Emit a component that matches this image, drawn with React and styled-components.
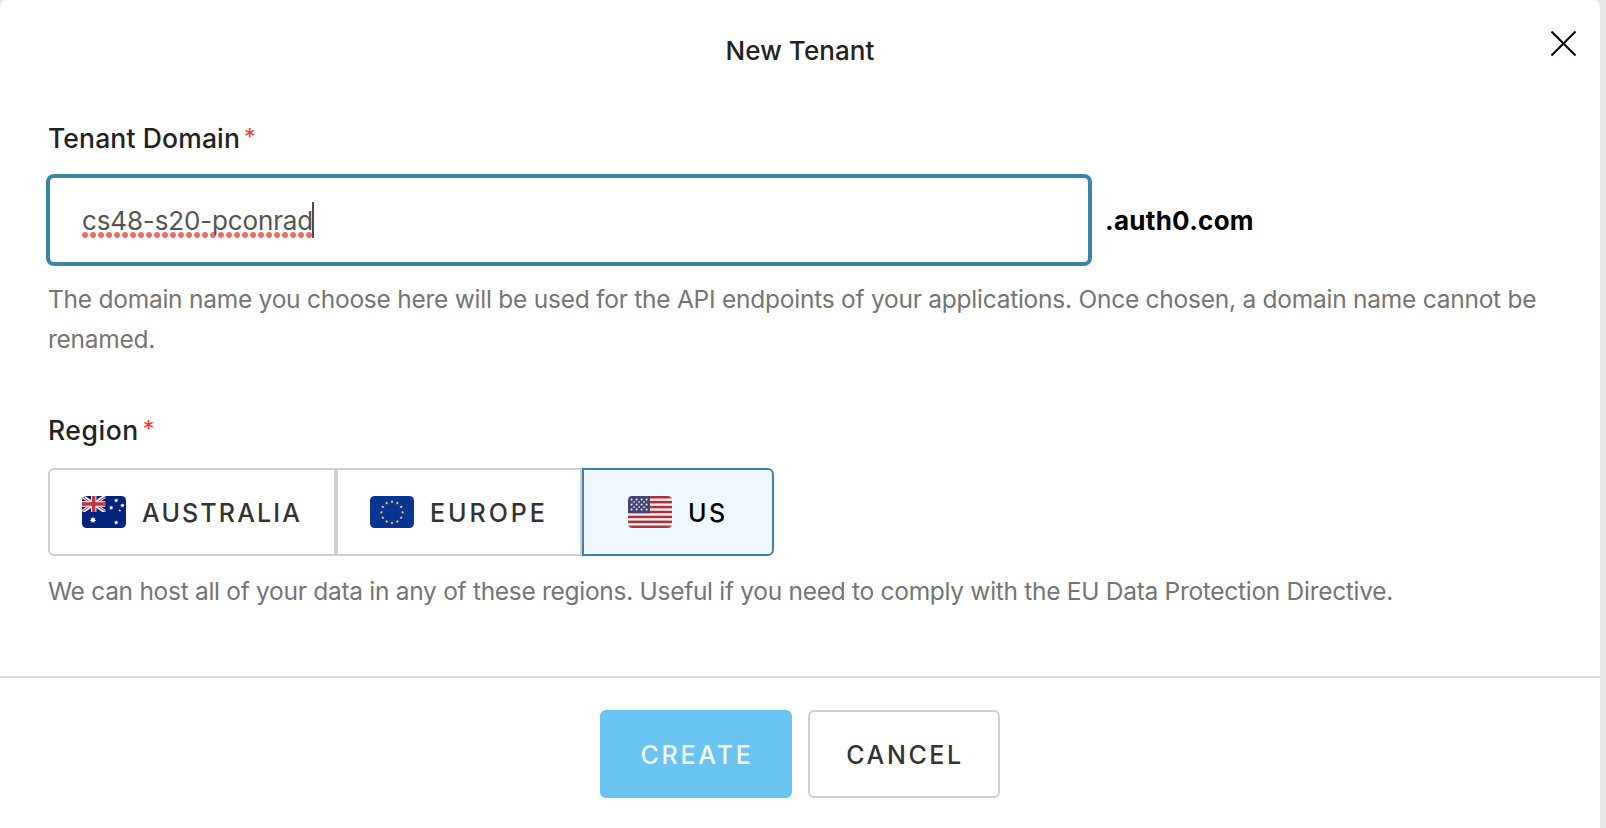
import React from 'react';
import styled, { createGlobalStyle, css } from 'styled-components';

const GlobalStyle = createGlobalStyle`
  * { box-sizing: border-box; }
  body {
    margin: 0;
    background: #e9e7e8;
    font-family: Inter, "Liberation Sans", sans-serif;
    -webkit-font-smoothing: antialiased;
  }
`;

const Dialog = styled.section`
  display: flex;
  flex-direction: column;
  width: 1600px;
  height: 828px;
  background: #fff;
  border-radius: 7px 7px 0 0;
  overflow: hidden;
`;

const Header = styled.header`
  display: grid;
  grid-template-columns: 49px 1fr 49px;
  height: 118px;
`;

const Title = styled.h1`
  grid-column: 2;
  margin: 31px 0 0;
  font-size: 26px;
  font-weight: 500;
  line-height: 40px;
  letter-spacing: 0.08px;
  text-align: center;
  color: #222;
`;

const CloseButton = styled.button`
  align-self: start;
  justify-self: start;
  margin-top: 31px;
  padding: 0;
  border: 0;
  background: none;
  line-height: 0;

  svg { display: block; }
`;

const Body = styled.div`
  flex: 1;
  padding: 0 48px;
`;

const Field = styled.div`
  display: flex;
  flex-direction: column;
  height: ${(p) => p.$height}px;
`;

const Label = styled.label`
  display: flex;
  height: 40px;
  font-size: 26.5px;
  font-weight: 500;
  line-height: 41px;
  letter-spacing: ${(p) => p.$track}px;
  color: #222;
`;

const Required = styled.span`
  margin-left: 4px;
  font-size: 23px;
  font-weight: 400;
  line-height: 38px;
  letter-spacing: 0;
  color: #f0392b;
`;

const DomainRow = styled.div`
  display: flex;
  align-items: center;
  margin: 16px 0 13px -2px;
`;

const DomainInput = styled.div`
  display: flex;
  align-items: center;
  width: 1046px;
  height: 92px;
  padding-left: 32px;
  border: 4px solid #3a84ab;
  border-radius: 8px;
  background: #fff;
`;

const Misspelled = styled.span`
  width: 230px;
  height: 36px;
  font-size: 26px;
  line-height: 37px;
  letter-spacing: -0.15px;
  white-space: nowrap;
  color: #555;
  background: radial-gradient(circle at 3px 3px, #ee6c61 2.6px, rgba(238, 108, 97, 0) 3.3px) 0 30px / 8px 6px repeat-x;
`;

const Caret = styled.span`
  width: 2px;
  height: 36px;
  background: #4c4c4c;
`;

const Suffix = styled.span`
  margin-left: 13px;
  font-size: 26px;
  font-weight: 650;
  line-height: 41px;
  letter-spacing: 0.27px;
  color: #000;
`;

const Help = styled.p`
  margin: 0;
  font-size: 24.5px;
  line-height: 40px;
  letter-spacing: ${(p) => p.$track}px;
  color: #757575;
`;

const RegionGroup = styled.div`
  display: flex;
  margin: 18px 0 15px;
`;

const RegionOption = styled.button`
  display: flex;
  align-items: center;
  gap: 16px;
  width: ${(p) => p.$width}px;
  height: 88px;
  padding: 0 0 0 ${(p) => p.$inset}px;
  border: 2px solid #d0d0d2;
  background: #fff;
  font: 500 25px/30px Inter, "Liberation Sans", sans-serif;
  letter-spacing: ${(p) => p.$track}px;
  color: #333;

  span { padding-top: 1px; }
  svg { display: block; }

  &:first-child { border-radius: 6px 0 0 6px; }
  &:last-child { border-radius: 0 6px 6px 0; }

  ${(p) => p.$selected && css`
    border-color: #3a84ab;
    background: #f0f8ff;
    color: #000;
  `}
`;

const Footer = styled.footer`
  display: flex;
  justify-content: center;
  gap: 16px;
  height: 152px;
  padding-top: 32px;
  border-top: 2px solid #d9d9d9;
`;

const Action = styled.button`
  width: 192px;
  height: 88px;
  padding: 1px 0 0 2px;
  border: 2px solid ${(p) => (p.$primary ? '#6ac4f0' : '#d0d0d2')};
  border-radius: 6px;
  background: ${(p) => (p.$primary ? '#6ac4f0' : '#fff')};
  font: 500 25px/30px Inter, "Liberation Sans", sans-serif;
  letter-spacing: ${(p) => p.$track}px;
  color: ${(p) => (p.$primary ? '#f3fbff' : '#333')};
`;

const starPath = (cx, cy, r, points = 5) =>
  Array.from({ length: points * 2 }, (_, i) => {
    const radius = i % 2 ? r * 0.5 : r;
    const a = (Math.PI * i) / points - Math.PI / 2;
    return `${i ? 'L' : 'M'}${(cx + radius * Math.cos(a)).toFixed(2)} ${(cy + radius * Math.sin(a)).toFixed(2)}`;
  }).join('') + 'Z';

function FlagFrame({ id, children }) {
  return (
    <svg width="44" height="32" viewBox="0 0 44 32" aria-hidden="true">
      <clipPath id={id}><rect width="44" height="32" rx="4.5" /></clipPath>
      <g clipPath={`url(#${id})`}>{children}</g>
    </svg>
  );
}

function AustraliaFlag() {
  return (
    <FlagFrame id="flag-au">
      <rect width="44" height="32" fill="#00247d" />
      <svg width="23.5" height="16" viewBox="0 0 23.5 16">
        <path d="M0 0L23.5 16M23.5 0L0 16" stroke="#eee" strokeWidth="3.6" />
        <path d="M0 .5L9 6.5M23.5 .5L15 6.3M0 15.5L8.5 9.7M23.5 15.5L15 9.7" stroke="#c8343a" strokeWidth="1" />
        <path d="M11.7 0V16M0 8H23.5" stroke="#eee" strokeWidth="5.4" />
        <path d="M11.7 0V16M0 8H23.5" stroke="#c8343a" strokeWidth="3.4" />
      </svg>
      <g fill="#fff">
        <path d={starPath(11, 24, 3.4, 7)} />
        <path d={starPath(34.2, 4.5, 2.3, 7)} />
        <path d={starPath(29.2, 11.8, 2.3, 7)} />
        <path d={starPath(40.4, 9.5, 2.3, 7)} />
        <path d={starPath(37.8, 14.5, 1.3)} />
        <path d={starPath(34.2, 26.6, 2.3, 7)} />
      </g>
    </FlagFrame>
  );
}

function EuropeFlag() {
  return (
    <FlagFrame id="flag-eu">
      <rect width="44" height="32" fill="#063592" />
      <g fill="#f5cf45">
        {Array.from({ length: 12 }, (_, i) => {
          const a = (Math.PI * i) / 6;
          return <path key={i} d={starPath(22 + 10.6 * Math.cos(a), 16.3 + 10.6 * Math.sin(a), 1.65)} />;
        })}
      </g>
    </FlagFrame>
  );
}

function UsFlag() {
  return (
    <FlagFrame id="flag-us">
      <rect width="44" height="32" fill="#efefef" />
      {Array.from({ length: 7 }, (_, i) => (
        <rect key={i} y={(i * 64) / 13} width="44" height={32 / 13} fill="#b02f39" />
      ))}
      <rect width="22" height="17.2" fill="#454275" />
      <g fill="#fff">
        {[3.5, 8.5, 13.5].flatMap((y) => [3.6, 8.6, 13.6, 18.6].map((x) => <circle key={`${x}-${y}`} cx={x} cy={y} r="0.95" />))}
        {[6, 11].flatMap((y) => [6.1, 11.1, 16.1].map((x) => <circle key={`${x}-${y}`} cx={x} cy={y} r="0.85" />))}
      </g>
    </FlagFrame>
  );
}

const regions = [
  { name: 'AUSTRALIA', Flag: AustraliaFlag, width: 288, inset: 32, track: 2.15 },
  { name: 'EUROPE', Flag: EuropeFlag, width: 246, inset: 32, track: 2.95 },
  { name: 'US', Flag: UsFlag, width: 192, inset: 44, track: 2.4, selected: true },
];

export default function App() {
  return (
    <>
      <GlobalStyle />
      <Dialog role="dialog" aria-label="New Tenant">
        <Header>
          <Title>New Tenant</Title>
          <CloseButton aria-label="Close">
            <svg width="26" height="26" viewBox="0 0 26 26">
              <path d="M0.5 0.5L24.5 24.5M24.5 0.5L0.5 24.5" stroke="#050505" strokeWidth="2" />
            </svg>
          </CloseButton>
        </Header>
        <Body>
          <Field $height={292}>
            <Label $track={0.14}>Tenant Domain<Required>*</Required></Label>
            <DomainRow>
              <DomainInput>
                <Misspelled>cs48-s20-pconrad</Misspelled>
                <Caret />
              </DomainInput>
              <Suffix>.auth0.com</Suffix>
            </DomainRow>
            <Help $track={-0.246}>
              The domain name you choose here will be used for the API endpoints of your applications. Once chosen, a domain name cannot be renamed.
            </Help>
          </Field>
          <Field $height={266}>
            <Label $track={0.55}>Region<Required>*</Required></Label>
            <RegionGroup>
              {regions.map(({ name, Flag, width, inset, track, selected }) => (
                <RegionOption key={name} $width={width} $inset={inset} $track={track} $selected={selected}>
                  <Flag />
                  <span>{name}</span>
                </RegionOption>
              ))}
            </RegionGroup>
            <Help $track={-0.29}>
              We can host all of your data in any of these regions. Useful if you need to comply with the EU Data Protection Directive.
            </Help>
          </Field>
        </Body>
        <Footer>
          <Action $primary $track={2.75}>CREATE</Action>
          <Action $track={2.6}>CANCEL</Action>
        </Footer>
      </Dialog>
    </>
  );
}
